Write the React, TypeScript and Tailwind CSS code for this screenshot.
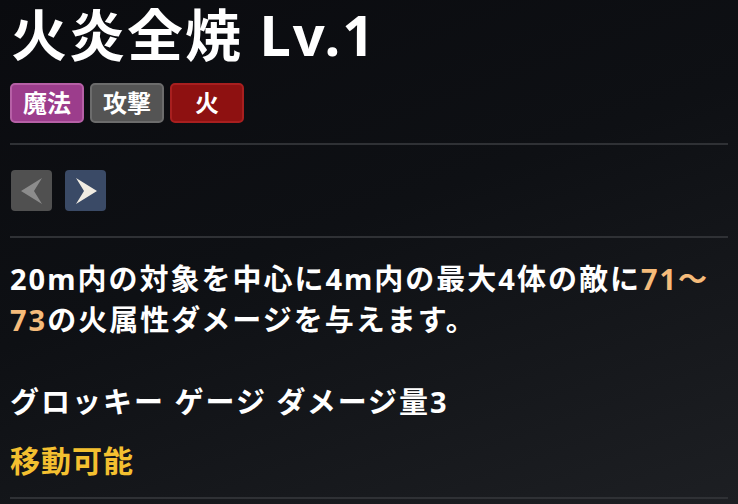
import React from "react";

const font = { fontFamily: '"Noto Sans", "Noto Sans CJK JP", sans-serif' };

function Arrow({ dir, fill }: { dir: "left" | "right"; fill: string }) {
  return (
    <svg width="24" height="28" viewBox="0 0 24 28">
      {dir === "right" ? (
        <polygon points="2,1 23,14 2,27 10,14" fill={fill} />
      ) : (
        <polygon points="22,1 1,14 22,27 14,14" fill={fill} />
      )}
    </svg>
  );
}

export default function App() {
  return (
    <div
      className="w-[738px] h-[504px] overflow-hidden px-[10px] text-white bg-[linear-gradient(160deg,#0a0b0f_0%,#0e1014_45%,#1d1f23_100%)]"
      style={font}
    >
      <div className="text-[56px] font-bold leading-[68px] tracking-[2px] pl-[1px] whitespace-nowrap">火炎全焼 Lv.1</div>
      <div className="flex gap-[6px] mt-[15px]">
        <div className="w-[74px] h-[40px] rounded-[5px] border-2 border-[#b660a6] bg-[#9c3d8c] flex items-center justify-center text-[24px] font-bold">
          魔法
        </div>
        <div className="w-[74px] h-[40px] rounded-[5px] border-2 border-[#6c6c6c] bg-[#545454] flex items-center justify-center text-[24px] font-bold">
          攻撃
        </div>
        <div className="w-[74px] h-[40px] rounded-[5px] border-2 border-[#a81f1f] bg-[#8e1111] flex items-center justify-center text-[24px] font-bold">
          火
        </div>
      </div>
      <div className="h-[2px] bg-[#2f3135] mt-[20px]" />
      <div className="flex gap-[13px] mt-[25px] pl-[1px]">
        <div className="w-[41px] h-[41px] rounded-[4px] bg-[#505050] flex items-center justify-center">
          <Arrow dir="left" fill="#8c8c8c" />
        </div>
        <div className="w-[41px] h-[41px] rounded-[4px] bg-[#3a4a66] flex items-center justify-center">
          <Arrow dir="right" fill="#f1ece2" />
        </div>
      </div>
      <div className="h-[2px] bg-[#2f3135] mt-[25px]" />
      <div className="mt-[20px] text-[29px] font-bold leading-[41px] tracking-[2px] whitespace-nowrap">
        <div>
          20m内の対象を中心に4m内の最大4体の敵に<span className="text-[#f5bb7a]">71〜</span>
        </div>
        <div>
          <span className="text-[#f5bb7a]">73</span>の火属性ダメージを与えます。
        </div>
        <div className="mt-[41px]">グロッキー ゲージ ダメージ量3</div>
        <div className="mt-[18px] text-[#f4c030] text-[30px] tracking-[1px]">移動可能</div>
      </div>
      <div className="h-[2px] bg-[#2f3135] mt-[16px]" />
    </div>
  );
}
